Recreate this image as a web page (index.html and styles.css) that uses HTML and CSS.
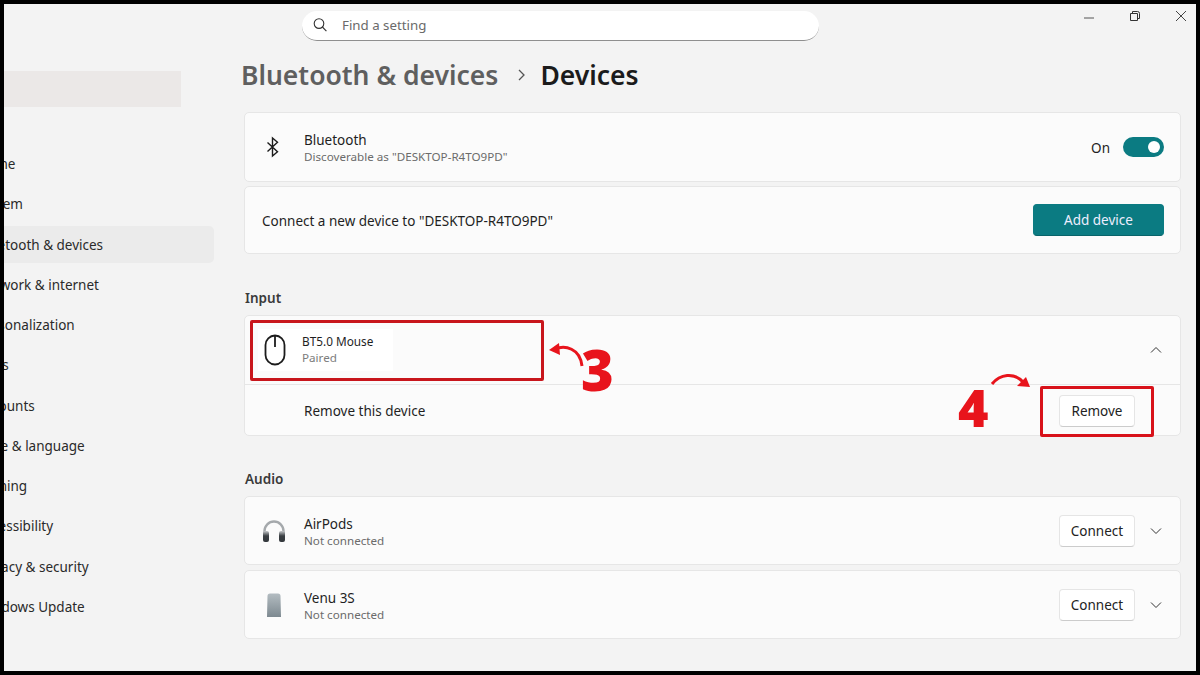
FILE: index.html
```html
<!DOCTYPE html>
<html lang="en">
<head>
<meta charset="utf-8">
<title>Settings</title>
<link rel="stylesheet" href="styles.css">
</head>
<body>
<div class="frame">
  <div class="window">
    <aside class="sidebar">
      <div class="app-title">Settings</div>
      <div class="user-patch"></div>
      <nav class="nav">
        <div class="nav-item">Home</div>
        <div class="nav-item">System</div>
        <div class="nav-item active">Bluetooth &amp; devices</div>
        <div class="nav-item">Network &amp; internet</div>
        <div class="nav-item">Personalization</div>
        <div class="nav-item">Apps</div>
        <div class="nav-item">Accounts</div>
        <div class="nav-item">Time &amp; language</div>
        <div class="nav-item">Gaming</div>
        <div class="nav-item">Accessibility</div>
        <div class="nav-item">Privacy &amp; security</div>
        <div class="nav-item">Windows Update</div>
      </nav>
    </aside>
    <main class="main">
      <header class="topbar">
        <div class="search">
          <svg class="search-icon" viewBox="0 0 16 16" width="16" height="16"><circle cx="7" cy="6.6" r="4.8" fill="none" stroke="#333" stroke-width="1.1"/><path d="M10.4 10l4 4.2" stroke="#333" stroke-width="1.1" fill="none"/></svg>
          <span>Find a setting</span>
        </div>
        <div class="win-controls">
          <svg viewBox="0 0 12 12" width="12" height="12"><path d="M1 8h10" stroke="#555" stroke-width="1"/></svg>
          <svg viewBox="0 0 12 12" width="12" height="12"><path d="M1.500 3.500h7v7h-7z M3.500 3.500V1.500h5a2 2 0 0 1 2 2v5h-2" fill="none" stroke="#333" stroke-width="1"/></svg>
          <svg viewBox="0 0 12 12" width="12" height="12"><path d="M1 1l10 10M11 1L1 11" stroke="#444" stroke-width="1"/></svg>
        </div>
      </header>
      <h1 class="crumb"><span class="crumb-parent">Bluetooth &amp; devices</span><svg class="crumb-sep" viewBox="0 0 10 14" width="10" height="14"><path d="M2 2l5 5-5 5" fill="none" stroke="#555" stroke-width="1.3"/></svg><span class="crumb-current">Devices</span></h1>

      <section class="card row bt">
        <svg class="icon" viewBox="0 0 20 24" width="20" height="24"><path d="M4.500 7.500l10 9.200-5 4.300V3l5 4.300-10 9.200" fill="none" stroke="#1c1c1c" stroke-width="1.4"/></svg>
        <div class="labels"><div class="name">Bluetooth</div><div class="sub">Discoverable as "DESKTOP-R4TO9PD"</div></div>
        <span class="on">On</span>
        <span class="toggle"><span class="knob"></span></span>
      </section>
      <section class="card row connect">
        <div class="name grow">Connect a new device to "DESKTOP-R4TO9PD"</div>
        <div class="btn primary">Add device</div>
      </section>

      <h2 class="group first">Input</h2>
      <section class="card mouse">
        <div class="row mouse-head">
          <div class="patch">
            <svg class="icon-m" viewBox="0 0 24 32" width="24" height="32"><rect x="2.500" y="1.500" width="19" height="29" rx="9.500" fill="none" stroke="#1c1c1c" stroke-width="1.8"/><path d="M12 2v11" stroke="#1c1c1c" stroke-width="1.8"/></svg>
            <div class="labels tight"><div class="name small">BT5.0 Mouse</div><div class="sub paired">Paired</div></div>
          </div>
          <svg class="chev" viewBox="0 0 12 8" width="12" height="8"><path d="M1 6.500l5-5 5 5" fill="none" stroke="#333" stroke-width="1"/></svg>
        </div>
        <div class="row mouse-body">
          <div class="name grow">Remove this device</div>
          <div class="btn remove">Remove</div>
        </div>
      </section>

      <h2 class="group">Audio</h2>
      <section class="card row dev">
        <svg class="icon" viewBox="0 0 24 24" width="24" height="24"><defs><linearGradient id="cup" x1="0" y1="0" x2="0" y2="1"><stop offset="0" stop-color="#c4c7c9"/><stop offset="0.45" stop-color="#3a3f43"/><stop offset="1" stop-color="#33383c"/></linearGradient></defs><path d="M2.500 15v-3a9.500 9.500 0 0 1 19 0v3" fill="none" stroke="#a5a9ac" stroke-width="2.400"/><rect x="1" y="12" width="6" height="11" rx="2" fill="url(#cup)"/><rect x="17" y="12" width="6" height="11" rx="2" fill="url(#cup)"/></svg>
        <div class="labels"><div class="name">AirPods</div><div class="sub">Not connected</div></div>
        <div class="btn">Connect</div>
        <svg class="chev" viewBox="0 0 12 8" width="12" height="8"><path d="M1 1.500l5 5 5-5" fill="none" stroke="#333" stroke-width="1"/></svg>
      </section>
      <section class="card row dev second">
        <svg class="icon" viewBox="0 0 24 24" width="24" height="24"><defs><linearGradient id="tower" x1="0" y1="0" x2="0" y2="1"><stop offset="0" stop-color="#b3bcc1"/><stop offset="1" stop-color="#7d8990"/></linearGradient></defs><path d="M5.500 3Q5.500 0.500 8 0.500h8q2.500 0 2.500 2.500l.5 21H5z" fill="url(#tower)"/></svg>
        <div class="labels"><div class="name">Venu 3S</div><div class="sub">Not connected</div></div>
        <div class="btn">Connect</div>
        <svg class="chev" viewBox="0 0 12 8" width="12" height="8"><path d="M1 1.500l5 5 5-5" fill="none" stroke="#333" stroke-width="1"/></svg>
      </section>
    </main>

    <div class="mark box-three"></div>
    <div class="mark box-four"></div>
    <div class="num num-three">3</div>
    <div class="num num-four">4</div>
    <svg class="arrow arrow-three" viewBox="0 0 36 28" width="36" height="28"><path d="M6 7C16 3 31 6 33 24" fill="none" stroke="#e8141c" stroke-width="3"/><path d="M0 8l10-7 1 12z" fill="#e8141c"/></svg>
    <svg class="arrow arrow-four" viewBox="0 0 44 18" width="44" height="18"><path d="M2 12C10 2 24 0 33 10" fill="none" stroke="#e8141c" stroke-width="3"/><path d="M40 15l-13-1 9-9z" fill="#e8141c"/></svg>
  </div>
</div>
</body>
</html>
```
FILE: styles.css
```css
* { box-sizing: border-box; }
html, body { margin: 0; height: 100%; background: #000; }
body { font-family: "Noto Sans", "Open Sans", sans-serif; color: #1b1b1b; overflow: hidden; }
.frame { width: 1200px; height: 675px; padding: 4px; background: #000; }
.window { position: relative; display: flex; width: 1192px; height: 667px; background: #f3f3f3; overflow: hidden; }

.sidebar { flex: 0 0 210px; width: 210px; }
.app-title { margin-left: -52px; padding-top: 12px; height: 67px; font-size: 12px; line-height: 17px; color: #222; }
.user-patch { width: 177px; height: 36px; background: #ebe8e7; }
.nav { margin-left: -27px; width: 237px; margin-top: 38px; }
.nav-item { display: flex; align-items: center; height: 37px; margin-bottom: 3.27px; padding-top: 1px; font-size: 13.5px; color: #2a2a2a; white-space: nowrap; border-radius: 5px; }
.nav-item.active { background: #ebebeb; }

.main { flex: 1; padding: 0 15px 0 30px; min-width: 0; }
.topbar { display: flex; align-items: center; height: 36px; padding-top: 7px; }
.search { display: flex; align-items: center; width: 517px; height: 30px; margin-left: 58px; padding: 0 0 0 10px; gap: 14px; background: #fff; border-radius: 15px; border-bottom: 1px solid #8f8f8f; font-size: 13.3px; color: #6a6a6a; }
.win-controls { display: flex; align-items: center; gap: 34px; margin-left: auto; margin-right: -6px; margin-top: -19px; }
.crumb { display: flex; align-items: center; margin: 15px 0 0 -3px; height: 40px; font-size: 26.5px; font-weight: 600; line-height: 40px; }
.crumb-parent { color: #5f5f5f; }
.crumb-sep { margin: 0 13px 0 19px; }
.crumb-current { color: #1b1b1b; }

.card { background: #fbfbfb; border: 1px solid #e6e6e6; border-radius: 5px; }
.row { display: flex; align-items: center; }
.bt { height: 70px; margin-top: 17px; padding: 0 16px 0 18px; }
.connect { height: 68px; margin-top: 4px; padding: 0 16px 0 17px; }
.connect .name, .mouse-body .name { margin-top: 2px; }
.icon { flex: 0 0 auto; margin-right: 21px; }
.dev .icon { margin-right: 18px; }
.labels { flex: 1; min-width: 0; margin-top: 2px; }
.labels.tight { margin-top: -2px; }
.grow { flex: 1; }
.name { font-size: 13.5px; line-height: 18px; color: #1f1f1f; }
.sub { font-size: 11.65px; line-height: 16px; color: #6b6b6b; }
.on { font-size: 13.5px; margin: 2px 13px 0 0; color: #222; }
.toggle { display: flex; align-items: center; justify-content: flex-end; width: 41px; height: 20px; padding-right: 4px; background: #0b7b82; border-radius: 10px; }
.knob { width: 12px; height: 12px; border-radius: 50%; background: #fff; }
.btn { display: flex; align-items: center; justify-content: center; width: 76px; height: 32px; font-size: 13.5px; color: #222; background: #fff; border: 1px solid #e5e5e5; border-bottom-color: #ccc; border-radius: 4px; }
.btn.primary { width: 131px; height: 32px; color: #eef; background: #0b7b82; border-color: #0b7b82; border-bottom-color: #086369; }
.btn.remove { margin-top: 2px; }

.group { margin: 35px 0 0 1px; height: 17px; font-size: 13.5px; font-weight: 600; line-height: 17px; color: #3a3a3a; }
.group.first { margin-top: 36px; }
.group + .card { margin-top: 8px; }
.mouse { height: 121px; }
.mouse-head { height: 69px; justify-content: space-between; padding-right: 18px; border-bottom: 1px solid #e6e6e6; }
.patch { display: flex; align-items: center; width: 135px; height: 42px; margin-left: 13px; padding-left: 5px; background: #fff; }
.icon-m { margin-right: 15px; }
.small { font-size: 11.8px; line-height: 17px; }
.paired { color: #7c7c7c; }
.mouse-body { height: 50px; padding: 0 45px 0 59px; }
.dev { height: 69px; padding: 0 18px 0 17px; }
.second { margin-top: 5px; }
.dev .btn { margin-right: 15px; }

.mark { position: absolute; border: 3px solid #d8121a; border-radius: 2px; }
.box-three { left: 246px; top: 316px; width: 294px; height: 61px; border-color: #c8161c; }
.box-four { left: 1036px; top: 382px; width: 114px; height: 51px; }
.num { position: absolute; font-family: "Open Sans", sans-serif; font-weight: 800; color: #e8141c; }
.num-three { left: 577px; top: 336px; font-size: 56px; line-height: 58px; }
.num-four { left: 954px; top: 376px; font-size: 52px; line-height: 54px; }
.arrow { position: absolute; }
.arrow-three { left: 545px; top: 338px; }
.arrow-four { left: 986px; top: 368px; }
```
